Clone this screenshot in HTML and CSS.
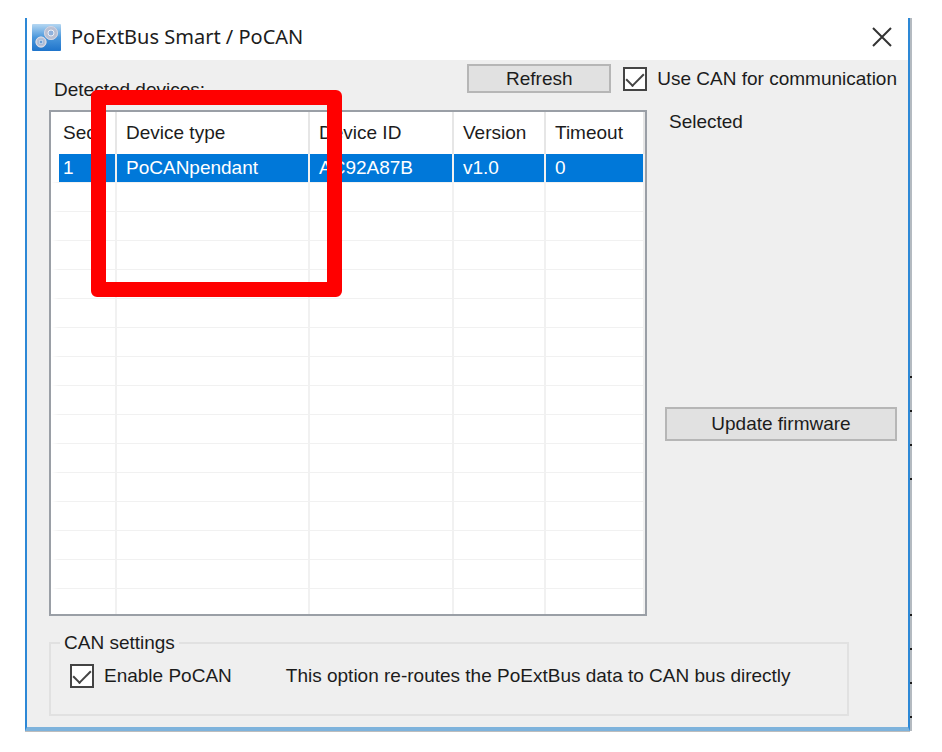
FILE: index.html
```
<!DOCTYPE html>
<html lang="en">
<head>
	<meta charset="UTF-8">
	<title>PoExtBus Smart / PoCAN</title>
	<link rel="stylesheet" href="styles.css">
</head>
<body>
	<div class="desktop">
		<div class="window">
			<header class="titlebar">
				<svg class="app-icon" width="29" height="27" viewBox="0 0 29 27">
					<defs>
						<linearGradient id="sky" x1="0" y1="0" x2="0" y2="1">
							<stop offset="0" stop-color="#b5d7f2"/>
							<stop offset="0.5" stop-color="#4a97dc"/>
							<stop offset="1" stop-color="#1f74cb"/>
						</linearGradient>
					</defs>
					<rect width="29" height="27" rx="1" fill="url(#sky)"/>
					<circle cx="19" cy="9" r="5" fill="none" stroke="#b9bfd2" stroke-width="4"/>
					<circle cx="19" cy="9" r="6.5" fill="none" stroke="#d3d8e6" stroke-width="1"/>
					<circle cx="19" cy="9" r="3" fill="#8fb0dc" stroke="#eef0f6"/>
					<circle cx="9" cy="18" r="4" fill="none" stroke="#bac1d5" stroke-width="3"/>
					<circle cx="9" cy="18" r="5" fill="none" stroke="#dde1ec" stroke-width="1"/>
					<circle cx="9" cy="18" r="2" fill="#6b9ed6" stroke="#e6e9f2"/>
				</svg>
				<h1 class="title">PoExtBus Smart / PoCAN</h1>
				<button class="close" type="button" aria-label="Close">
					<svg width="20" height="20" viewBox="0 0 20 20">
						<path d="M1 1L19 19M19 1L1 19" fill="none" stroke="#333" stroke-width="2"/>
					</svg>
				</button>
			</header>

			<main class="content">
				<div class="toolbar">
					<span class="detected">Detected devices:</span>
					<button class="btn refresh" type="button">Refresh</button>
					<label class="check"><input type="checkbox" checked>Use CAN for communication</label>
				</div>

				<div class="panels">
					<div class="devices">
						<table>
							<thead>
								<tr>
									<th class="col-sec">Sec</th>
									<th class="col-type">Device type</th>
									<th class="col-id">Device ID</th>
									<th class="col-version">Version</th>
									<th>Timeout</th>
								</tr>
							</thead>
							<tbody>
								<tr class="selected"><td>1</td><td>PoCANpendant</td><td>AC92A87B</td><td>v1.0</td><td>0</td></tr>
								<tr><td></td><td></td><td></td><td></td><td></td></tr>
								<tr><td></td><td></td><td></td><td></td><td></td></tr>
								<tr><td></td><td></td><td></td><td></td><td></td></tr>
								<tr><td></td><td></td><td></td><td></td><td></td></tr>
								<tr><td></td><td></td><td></td><td></td><td></td></tr>
								<tr><td></td><td></td><td></td><td></td><td></td></tr>
								<tr><td></td><td></td><td></td><td></td><td></td></tr>
								<tr><td></td><td></td><td></td><td></td><td></td></tr>
								<tr><td></td><td></td><td></td><td></td><td></td></tr>
								<tr><td></td><td></td><td></td><td></td><td></td></tr>
								<tr><td></td><td></td><td></td><td></td><td></td></tr>
								<tr><td></td><td></td><td></td><td></td><td></td></tr>
								<tr><td></td><td></td><td></td><td></td><td></td></tr>
								<tr><td></td><td></td><td></td><td></td><td></td></tr>
								<tr class="last"><td></td><td></td><td></td><td></td><td></td></tr>
							</tbody>
						</table>
						<div class="marker"></div>
					</div>
					<aside class="side">
						<span class="side-label">Selected</span>
						<button class="btn update" type="button">Update firmware</button>
					</aside>
				</div>

				<fieldset class="settings">
					<legend>CAN settings</legend>
					<label class="check"><input type="checkbox" checked>Enable PoCAN</label>
					<span>This option re-routes the PoExtBus data to CAN bus directly</span>
				</fieldset>
			</main>
		</div>
		<!-- sliver of the window behind -->
		<div class="behind">
			<div class="ticks"></div>
			<div class="ticks"></div>
		</div>
	</div>
</body>
</html>
```
FILE: styles.css
```
*{
	box-sizing: border-box;
}
body{
	margin: 0;
	background: #fff;
	color: #1c1c1c;
	font: 19px/24px "Liberation Sans", Arial, sans-serif;
}
.desktop{
	display: flex;
	padding: 18px 30px 20px 25px;
}
.window{
	flex: 1;
	background: #efefef;
	border: 2px solid #2d88d6;
	border-top: 0;
	border-bottom: 4px solid #7eb3dc;
	box-shadow: 0 1px 0 #bdbdbd;
}
.behind{
	display: flex;
	flex-direction: column;
	justify-content: flex-end;
	gap: 134px;
	width: 2px;
	padding-bottom: 13px;
	background: #b4bac0;
}
.ticks{
	height: 104px;
	background: repeating-linear-gradient(#1a1a1a 0 2px, transparent 2px 34px);
}

/* title bar */
.titlebar{
	display: flex;
	align-items: center;
	height: 42px;
	padding: 0 16px 4px 5px;
	background: #fff;
}
.title{
	flex: 1;
	margin: 0 0 0 10px;
	font: 20px/28px "Noto Sans", "Open Sans", sans-serif;
}
.close{
	display: flex;
	padding: 0;
	border: 0;
	background: none;
}

/* controls */
.btn{
	padding: 0;
	border: 2px solid #b6b6b6;
	background: #e1e1e1;
	color: inherit;
	font: inherit;
}
.check{
	display: flex;
	align-items: center;
	gap: 10px;
	white-space: nowrap;
}
.check input{
	appearance: none;
	display: flex;
	justify-content: center;
	width: 24px;
	height: 24px;
	margin: 0;
	border: 2px solid #444;
	background: #fff;
}
.check input:checked::before{
	content: "";
	width: 8px;
	height: 15px;
	border: solid #444;
	border-width: 0 2px 2px 0;
	transform: rotate(45deg);
}

.content{
	padding: 4px 11px 11px 22px;
}
.toolbar{
	display: flex;
	align-items: flex-start;
	height: 46px;
}
.detected{
	flex: 1;
	padding: 14px 0 0 5px;
}
.refresh{
	width: 144px;
	height: 29px;
	margin-right: 12px;
}
.toolbar .check{
	padding-top: 3px;
}

.panels{
	display: flex;
	gap: 18px;
}
.devices{
	position: relative;
	flex: 1;
	border: 2px solid #9a9fa6;
	background: #fff;
}
table{
	width: 100%;
	table-layout: fixed;
	border-spacing: 0;
}
th, td{
	padding: 0 0 0 9px;
	border-right: 2px solid #f1f1f1;
	font-weight: normal;
	text-align: left;
	white-space: nowrap;
}
th{
	height: 42px;
	border-color: #e6e6e6;
}
td{
	height: 29px;
	border-bottom: 1px solid #f1f1f1;
}
th:first-child, td:first-child{
	padding-left: 4px;
	border-left: 8px solid #fff;
}
.col-sec{ width: 66px; }
.col-type{ width: 193px; }
.col-id{ width: 144px; }
.col-version{ width: 92px; }
.selected td{
	background: #0078d9;
	color: #fff;
}
.last td{
	height: 25px;
	border-bottom: 0;
}
.marker{
	position: absolute;
	top: -22px;
	left: 40px;
	width: 251px;
	height: 207px;
	border: 15px solid #f00;
	border-radius: 6px;
}

.side{
	display: flex;
	flex-direction: column;
	width: 232px;
}
.side-label{
	padding-left: 4px;
}
.update{
	height: 34px;
	margin-top: 273px;
}

.settings{
	display: flex;
	gap: 54px;
	margin: 15px 48px 0 0;
	padding: 9px 19px 26px;
	border: 2px solid #e1e1e1;
}
.settings legend{
	margin-left: -10px;
	padding: 0 4px;
}
```
